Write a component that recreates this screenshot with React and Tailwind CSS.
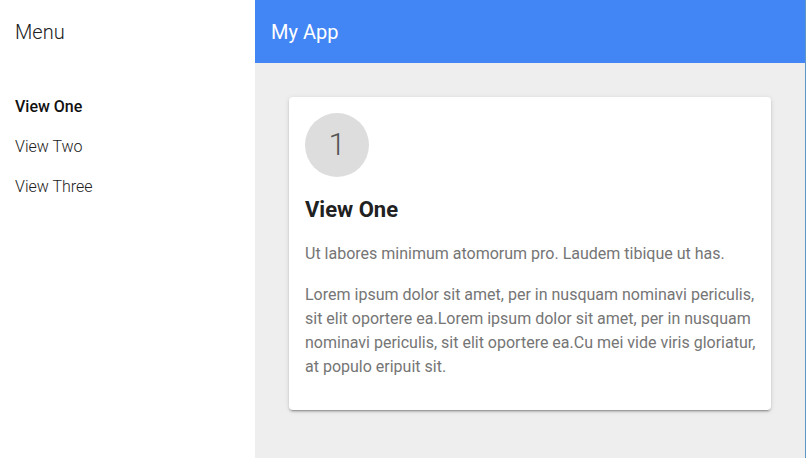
export default function App() {
  return (
    <div className="flex h-[458px] w-[806px] overflow-hidden bg-white font-['Roboto',sans-serif]">
      <aside className="flex w-[255px] shrink-0 flex-col bg-white">
        <div className="flex h-[63px] items-center px-[15px] text-[20px] font-light text-[#212121]">Menu</div>
        <nav className="mt-[24px] flex flex-col">
          <a className="flex h-[40px] items-center px-[15px] text-[16px] font-medium text-[#111]">View One</a>
          <a className="flex h-[40px] items-center px-[15px] text-[16px] font-light text-[#212121]">View Two</a>
          <a className="flex h-[40px] items-center px-[15px] text-[16px] font-light text-[#212121]">View Three</a>
        </nav>
      </aside>
      <div className="flex flex-1 flex-col border-r border-[#5b96c4] bg-[#eeeeee]">
        <header className="flex h-[63px] shrink-0 items-center bg-[#4285f4] px-[16px] text-[20px] text-white">My App</header>
        <main className="px-[34px] pt-[34px]">
          <div className="rounded-[4px] bg-white py-[16px] pr-[12px] pl-[16px] shadow-[0_2px_2px_0_rgba(0,0,0,0.14),0_3px_1px_-2px_rgba(0,0,0,0.2),0_1px_5px_0_rgba(0,0,0,0.12)]">
            <div className="flex h-[64px] w-[64px] items-center justify-center rounded-full bg-[#dddddd] text-[31px] font-light text-[#555]">1</div>
            <h2 className="mt-[19px] text-[22px] leading-[28px] font-bold text-[#212121]">View One</h2>
            <p className="mt-[18px] text-[16px] leading-[24px] text-[#757575]">Ut labores minimum atomorum pro. Laudem tibique ut has.</p>
            <p className="mt-[17px] mb-[15px] text-[16px] leading-[24px] text-[#757575]">
              Lorem ipsum dolor sit amet, per in nusquam nominavi periculis, sit elit oportere ea.Lorem ipsum dolor sit amet, per in nusquam nominavi periculis, sit elit oportere ea.Cu mei vide viris gloriatur, at populo eripuit sit.
            </p>
          </div>
        </main>
      </div>
    </div>
  );
}
